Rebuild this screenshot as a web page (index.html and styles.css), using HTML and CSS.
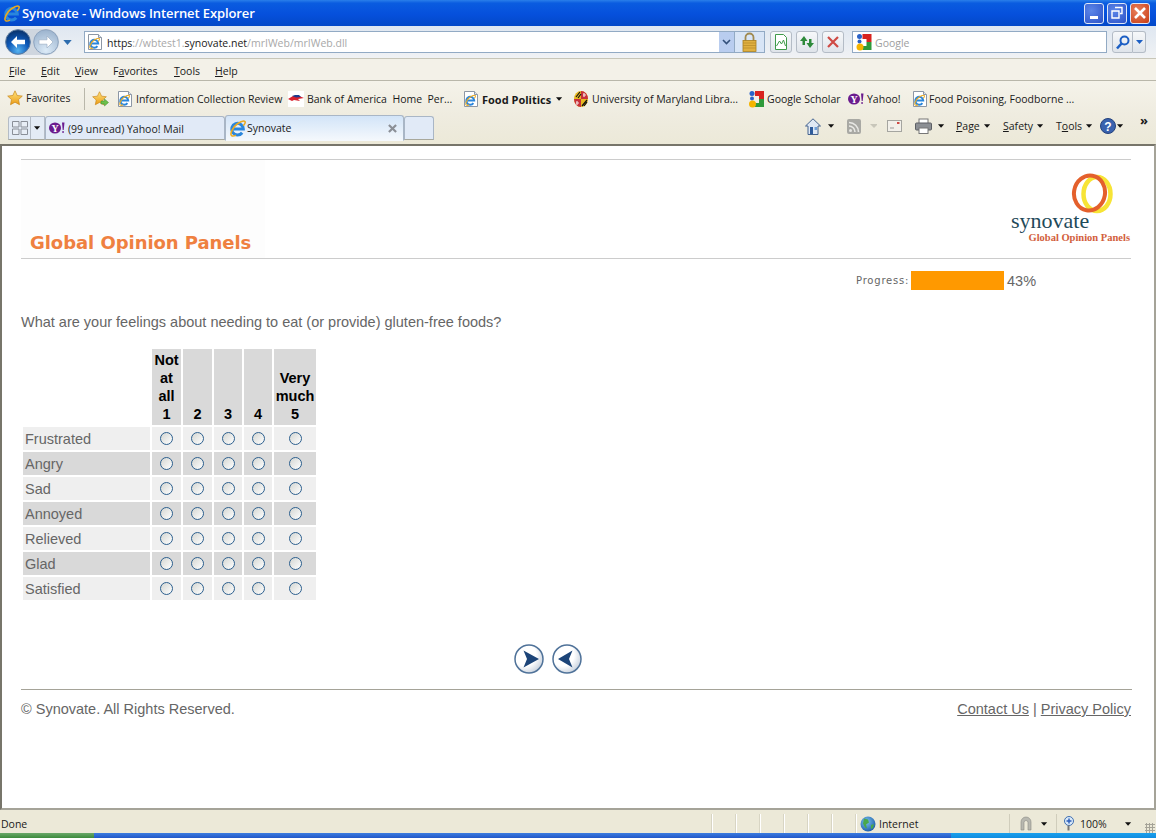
FILE: index.html
```html
<!DOCTYPE html>
<html lang="en">
<head>
  <meta charset="UTF-8">
  <title>Synovate - Windows Internet Explorer</title>
  <link rel="stylesheet" href="styles.css">
</head>
<body>
  <svg class="sprite" width="0" height="0">
    <defs>
      <linearGradient id="star-fill" x1="0" y1="0" x2="0" y2="1">
        <stop offset="0" stop-color="#ffe680"/>
        <stop offset="1" stop-color="#eb9a14"/>
      </linearGradient>
      <radialGradient id="orb-back" cx="0.5" cy="0.85" r="0.8">
        <stop offset="0" stop-color="#58b4f0"/>
        <stop offset="0.55" stop-color="#0d58b8"/>
        <stop offset="1" stop-color="#0a3570"/>
      </radialGradient>
      <radialGradient id="orb-fwd" cx="0.5" cy="0.85" r="0.8">
        <stop offset="0" stop-color="#dcebf8"/>
        <stop offset="1" stop-color="#9fb6d0"/>
      </radialGradient>
      <radialGradient id="orb-nav" cx="0.35" cy="0.35" r="0.8">
        <stop offset="0.5" stop-color="#ffffff"/>
        <stop offset="1" stop-color="#b8c4d4"/>
      </radialGradient>
      <radialGradient id="globe" cx="0.4" cy="0.35" r="0.7">
        <stop offset="0" stop-color="#7cc4f0"/>
        <stop offset="1" stop-color="#1c5aa8"/>
      </radialGradient>
      <symbol id="ie" viewBox="0 0 16 16">
        <path d="M4 8.500h9.500A5.500 5.500 0 1 0 12.400 12" fill="none" stroke="#2a86dc" stroke-width="2.800"/>
        <path d="M2.500 14.800C.5 13.300 3.500 6.500 8 3.500c3-2 6-3 7-2 .8.8-.3 2.500-1.500 4M2.500 14.800c1 .6 2.500.2 4-.6" fill="none" stroke="#eba91f" stroke-width="1.500"/>
      </symbol>
      <symbol id="page" viewBox="0 0 16 16">
        <path d="M1.500.5h10l3 3v12h-13z" fill="#fff" stroke="#8d97a5"/>
        <path d="M11.500.5v3h3" fill="#dfe6ee" stroke="#8d97a5"/>
        <use href="#ie" x="1.500" y="3.500" width="11.500" height="11.500"/>
      </symbol>
      <symbol id="star" viewBox="0 0 16 16">
        <path d="M8 .8l2.200 4.700 5.100.6-3.800 3.500 1 5.100L8 12.200l-4.500 2.500 1-5.100L.7 6.100l5.100-.6z" fill="url(#star-fill)" stroke="#c9871a" stroke-width=".7"/>
      </symbol>
      <symbol id="yahoo" viewBox="0 0 16 12">
        <ellipse cx="6" cy="6" rx="6" ry="5.500" fill="#6a1b8e"/>
        <text x="6" y="9.500" font-family="Liberation Serif, serif" font-weight="700" font-size="10" fill="#fff" text-anchor="middle">Y</text>
        <path d="M13 .5h2.500L14.700 8h-1zM13.400 9h1.300v2h-1.300z" fill="#6a1b8e"/>
      </symbol>
      <symbol id="google" viewBox="0 0 16 18">
        <path d="M7 1h9v8H11V6H7z" fill="#d8231f"/>
        <path d="M11 9h5v8H7v-4h4z" fill="#2f9a3a"/>
        <circle cx="4" cy="3.500" r="2.500" fill="#2a63c8"/>
        <circle cx="4" cy="8.500" r="2" fill="#2a63c8"/>
        <circle cx="4.500" cy="14" r="3.500" fill="#f5b400"/>
      </symbol>
      <symbol id="down" viewBox="0 0 8 4"><path d="M0 0h7L3.500 4z" fill="#111"/></symbol>
    </defs>
  </svg>

  <div class="window">
    <div class="titlebar">
      <svg class="title-icon"><use href="#ie"/></svg>
      <span class="title-text">Synovate - Windows Internet Explorer</span>
      <div class="win-buttons">
        <button class="win-btn"><span class="glyph-min"></span></button>
        <button class="win-btn">
          <svg width="14" height="14" viewBox="0 0 14 14"><path d="M5 1.500h7v6h-2M2 5h7v7H2z" fill="none" stroke="#fff" stroke-width="1.400"/></svg>
        </button>
        <button class="win-btn win-close">
          <svg width="14" height="14" viewBox="0 0 14 14"><path d="M2 2l10 10M12 2L2 12" stroke="#fff" stroke-width="2.600"/></svg>
        </button>
      </div>
    </div>

    <div class="addressbar">
      <div class="nav-orbs">
        <svg width="26" height="26" viewBox="0 0 26 26"><circle cx="13" cy="13" r="12.300" fill="url(#orb-back)" stroke="#5a7aa0"/><path d="M6 13l6-6v3.800h8v4.400h-8V19z" fill="#fff"/></svg>
        <svg width="26" height="26" viewBox="0 0 26 26"><circle cx="13" cy="13" r="12.300" fill="url(#orb-fwd)" stroke="#8ea4bf"/><path d="M20 13l-6-6v3.800H6v4.400h8V19z" fill="#fff" stroke="#9db0c6" stroke-width=".7"/></svg>
      </div>
      <svg class="nav-drop" viewBox="0 0 10 6"><path d="M0 0h10L5 6z" fill="#2d6cae"/></svg>
      <div class="urlbox">
        <svg class="url-icon"><use href="#page"/></svg>
        <span class="url"><b>https</b>://wbtest1.<b>synovate.net</b>/mrIWeb/mrIWeb.dll</span>
        <span class="url-drop">
          <svg width="9" height="6" viewBox="0 0 9 6"><path d="M1 1l3.500 3.500L8 1" fill="none" stroke="#33507a" stroke-width="1.600"/></svg>
        </span>
        <span class="url-lock">
          <svg width="15" height="20" viewBox="0 0 15 20"><path d="M3.500 9V5.500a4 4 0 0 1 8 0V9" fill="none" stroke="#a08a50" stroke-width="1.800"/><rect x="1" y="8.500" width="13" height="11" fill="#e0b040" stroke="#a97f20" stroke-width=".8"/><path d="M1 11h13M1 13.500h13M1 16h13" stroke="#b48a28" stroke-width=".7"/></svg>
        </span>
      </div>
      <div class="action-btns">
        <button class="action-btn">
          <svg width="14" height="16" viewBox="0 0 14 16"><path d="M1.500.5h8l3 3v12h-11z" fill="#fff" stroke="#3f9a4a"/><path d="M2.500 12l3-5 2 3 2-4 2 6" fill="none" stroke="#3f9a4a"/></svg>
        </button>
        <button class="action-btn">
          <svg width="16" height="16" viewBox="0 0 16 16"><path d="M5 2L1 7h2.500v4H6V7h2.500z" fill="#2d8a3a"/><path d="M11 14l4-5h-2.500V5H10v4H7.500z" fill="#2d8a3a"/></svg>
        </button>
        <button class="action-btn">
          <svg width="12" height="12" viewBox="0 0 12 12"><path d="M1 1l10 10M11 1L1 11" stroke="#cf4a44" stroke-width="2.200"/></svg>
        </button>
      </div>
      <div class="searchbox">
        <svg class="search-icon"><use href="#google"/></svg>
        <span class="search-hint">Google</span>
      </div>
      <div class="search-btns">
        <button class="search-go">
          <svg width="14" height="15" viewBox="0 0 14 15"><circle cx="8.500" cy="5.500" r="4" fill="none" stroke="#1c5fc4" stroke-width="2"/><path d="M5.500 8.500L1 13.500" stroke="#1c5fc4" stroke-width="2.600"/></svg>
        </button>
        <button class="search-drop">
          <svg width="7" height="4" viewBox="0 0 7 4"><path d="M0 0h7L3.500 4z" fill="#1c5fc4"/></svg>
        </button>
      </div>
    </div>

    <div class="menubar">
      <span class="m-file"><u>F</u>ile</span>
      <span class="m-edit"><u>E</u>dit</span>
      <span class="m-view"><u>V</u>iew</span>
      <span class="m-fav">F<u>a</u>vorites</span>
      <span class="m-tools"><u>T</u>ools</span>
      <span class="m-help"><u>H</u>elp</span>
    </div>

    <div class="favbar">
      <span class="fav fav-main"><svg class="fav-star"><use href="#star"/></svg>Favorites</span>
      <span class="fav-sep"></span>
      <svg class="fav-add" viewBox="0 0 17 16"><use href="#star" width="15" height="15"/><path d="M9 10h3.500V8l4 3.500-4 3.500v-2H9z" fill="#6cc04a" stroke="#3f8a2c" stroke-width=".5"/></svg>
      <span class="fav f-info"><svg class="fav-icon"><use href="#page"/></svg>Information Collection Review</span>
      <span class="fav f-boa">
        <svg class="fav-icon" viewBox="0 0 16 16"><rect width="16" height="16" fill="#fff"/><path d="M0 8l5-3h6l5 2-6 1 2 2-6-1-2 1z" fill="#d8202c"/><path d="M4 5l3-1h4l2 2-5 .5z" fill="#1a3a8c"/></svg>
        Bank of America&nbsp; Home&nbsp; Per...
      </span>
      <span class="fav f-food"><svg class="fav-icon"><use href="#page"/></svg><b>Food Politics</b><svg class="caret"><use href="#down"/></svg></span>
      <span class="fav f-umd">
        <svg class="fav-icon" viewBox="0 0 16 16"><ellipse cx="8" cy="8" rx="7" ry="8" fill="#e8b820"/><path d="M8 0a7 8 0 0 1 7 8H8zM8 8v8a7 8 0 0 1-7-8z" fill="#c8303a"/><path d="M11 2v4M10 4h3M4 10v4M3 12h3" stroke="#f4e0e0" stroke-width="1.200"/><path d="M3 6l4-5M5 7l3-4M9 15l5-6M11 15l3-4" stroke="#111" stroke-width="1.200"/></svg>
        University of Maryland Libra...
      </span>
      <span class="fav f-scholar"><svg class="fav-icon google-tall"><use href="#google"/></svg>Google Scholar</span>
      <span class="fav f-yahoo"><svg class="fav-icon yahoo-small"><use href="#yahoo"/></svg>Yahoo!</span>
      <span class="fav f-poison"><svg class="fav-icon"><use href="#page"/></svg>Food Poisoning, Foodborne ...</span>
    </div>

    <div class="tabbar">
      <div class="quicktabs">
        <span class="qt-grid">
          <svg width="16" height="14" viewBox="0 0 16 14"><path d="M.5.500h6.500v5.500H.5zM9 .500h6.500v5.500H9zM.5 8h6.500v5.500H.5zM9 8h6.500v5.500H9z" fill="#e8eef6" stroke="#8a8f98"/></svg>
        </span>
        <span class="qt-drop"><svg class="caret"><use href="#down"/></svg></span>
      </div>
      <div class="tab">
        <svg class="tab-yahoo"><use href="#yahoo"/></svg>
        <span class="tab-text">(99 unread) Yahoo! Mail</span>
      </div>
      <div class="tab tab-active">
        <svg class="tab-ie"><use href="#ie"/></svg>
        <span class="tab-label">Synovate</span>
        <svg class="tab-close" viewBox="0 0 10 10"><path d="M1 1l8 8M9 1L1 9" stroke="#8b8f96" stroke-width="2.400"/></svg>
      </div>
      <div class="tab tab-new"></div>

      <div class="commands">
        <svg class="cmd-home" viewBox="0 0 16 17"><path d="M8 .8L.5 8h2.500v8.500h10V8h2.500z" fill="#dfe8f4" stroke="#44638e"/><rect x="5" y="9" width="3" height="7" fill="#2f5c9c"/><rect x="9.500" y="9" width="2.500" height="3" fill="#6fa0d8"/></svg>
        <svg class="caret c-home"><use href="#down"/></svg>
        <svg class="cmd-rss" viewBox="0 0 14 15"><rect width="14" height="15" rx="2" fill="#a9a9a4"/><circle cx="3.500" cy="11.500" r="1.500" fill="#e8e8e4"/><path d="M2 7a6 6 0 0 1 6 6M2 3.500A9.500 9.500 0 0 1 11.500 13" fill="none" stroke="#e8e8e4" stroke-width="1.600"/></svg>
        <svg class="caret c-rss"><path d="M0 0h8L4 4z" fill="#c8c6ba"/></svg>
        <svg class="cmd-mail" viewBox="0 0 15 12"><rect x=".5" y=".5" width="14" height="11" fill="#f2f0ea" stroke="#a5a5a0"/><rect x="10" y="2" width="2.500" height="2" fill="#cf4a44"/><path d="M3 8h4" stroke="#999"/></svg>
        <svg class="cmd-print" viewBox="0 0 17 16"><rect x="4" y="1" width="9" height="5" fill="#fff" stroke="#777"/><rect x=".5" y="5" width="16" height="7" rx="1" fill="#8c8f94" stroke="#5c5f64"/><rect x="4" y="10" width="9" height="5.500" fill="#fff" stroke="#777"/></svg>
        <svg class="caret c-print"><use href="#down"/></svg>
        <span class="cmd c-page"><u>P</u>age<svg class="caret"><use href="#down"/></svg></span>
        <span class="cmd c-safety"><u>S</u>afety<svg class="caret"><use href="#down"/></svg></span>
        <span class="cmd c-tools">T<u>o</u>ols<svg class="caret"><use href="#down"/></svg></span>
        <svg class="cmd-help" viewBox="0 0 16 16"><circle cx="8" cy="8" r="7.500" fill="#3a62ae" stroke="#24427c"/><text x="8" y="12.500" font-family="Liberation Sans, sans-serif" font-weight="700" font-size="12" fill="#fff" text-anchor="middle">?</text></svg>
        <svg class="caret c-help"><use href="#down"/></svg>
        <span class="chevrons">»</span>
      </div>
    </div>

    <main class="content">
      <header class="banner">
        <div class="banner-title"><h1>Global Opinion Panels</h1></div>
        <div class="logo">
          <svg class="logo-ring" viewBox="0 0 42 42">
            <ellipse cx="26" cy="21" rx="13.500" ry="17" fill="none" stroke="#f7e436" stroke-width="4.500"/>
            <ellipse cx="18.500" cy="20" rx="15.500" ry="17.500" fill="none" stroke="#e4602c" stroke-width="4" transform="rotate(10 18.500 20)"/>
          </svg>
          <span class="logo-name">synovate</span>
          <span class="logo-sub">Global Opinion Panels</span>
        </div>
      </header>

      <div class="progress">
        <span class="progress-label">Progress:</span>
        <span class="progress-bar"></span>
        <span class="progress-value">43%</span>
      </div>

      <p class="question">What are your feelings about needing to eat (or provide) gluten-free foods?</p>

      <table class="grid">
        <thead>
          <tr>
            <th class="blank"></th>
            <th class="c1">Not<br>at<br>all<br>1</th>
            <th class="c2">2</th>
            <th class="c3">3</th>
            <th class="c4">4</th>
            <th class="c5">Very<br>much<br>5</th>
          </tr>
        </thead>
        <tbody>
          <tr>
            <td class="row-label">Frustrated</td>
            <td><input class="radio" type="radio" name="q1"></td>
            <td><input class="radio" type="radio" name="q1"></td>
            <td><input class="radio" type="radio" name="q1"></td>
            <td><input class="radio" type="radio" name="q1"></td>
            <td><input class="radio" type="radio" name="q1"></td>
          </tr>
          <tr class="alt">
            <td class="row-label">Angry</td>
            <td><input class="radio" type="radio" name="q2"></td>
            <td><input class="radio" type="radio" name="q2"></td>
            <td><input class="radio" type="radio" name="q2"></td>
            <td><input class="radio" type="radio" name="q2"></td>
            <td><input class="radio" type="radio" name="q2"></td>
          </tr>
          <tr>
            <td class="row-label">Sad</td>
            <td><input class="radio" type="radio" name="q3"></td>
            <td><input class="radio" type="radio" name="q3"></td>
            <td><input class="radio" type="radio" name="q3"></td>
            <td><input class="radio" type="radio" name="q3"></td>
            <td><input class="radio" type="radio" name="q3"></td>
          </tr>
          <tr class="alt">
            <td class="row-label">Annoyed</td>
            <td><input class="radio" type="radio" name="q4"></td>
            <td><input class="radio" type="radio" name="q4"></td>
            <td><input class="radio" type="radio" name="q4"></td>
            <td><input class="radio" type="radio" name="q4"></td>
            <td><input class="radio" type="radio" name="q4"></td>
          </tr>
          <tr>
            <td class="row-label">Relieved</td>
            <td><input class="radio" type="radio" name="q5"></td>
            <td><input class="radio" type="radio" name="q5"></td>
            <td><input class="radio" type="radio" name="q5"></td>
            <td><input class="radio" type="radio" name="q5"></td>
            <td><input class="radio" type="radio" name="q5"></td>
          </tr>
          <tr class="alt">
            <td class="row-label">Glad</td>
            <td><input class="radio" type="radio" name="q6"></td>
            <td><input class="radio" type="radio" name="q6"></td>
            <td><input class="radio" type="radio" name="q6"></td>
            <td><input class="radio" type="radio" name="q6"></td>
            <td><input class="radio" type="radio" name="q6"></td>
          </tr>
          <tr>
            <td class="row-label">Satisfied</td>
            <td><input class="radio" type="radio" name="q7"></td>
            <td><input class="radio" type="radio" name="q7"></td>
            <td><input class="radio" type="radio" name="q7"></td>
            <td><input class="radio" type="radio" name="q7"></td>
            <td><input class="radio" type="radio" name="q7"></td>
          </tr>
        </tbody>
      </table>

      <div class="pager">
        <svg class="pager-btn" viewBox="0 0 30 30"><circle cx="15" cy="15" r="14" fill="url(#orb-nav)" stroke="#4f7299" stroke-width="1.500"/><path d="M9.500 6.500L25 15 9.500 23.500 13 15z" fill="#1c4478"/></svg>
        <svg class="pager-btn" viewBox="0 0 30 30"><circle cx="15" cy="15" r="14" fill="url(#orb-nav)" stroke="#4f7299" stroke-width="1.500"/><path d="M20.500 6.500L6 15l14.500 8.500L17 15z" fill="#1c4478"/></svg>
      </div>

      <footer class="footer">
        <span>© Synovate. All Rights Reserved.</span>
        <span><a href="#">Contact Us</a> | <a href="#">Privacy Policy</a></span>
      </footer>
    </main>

    <div class="statusbar">
      <span class="status-text">Done</span>
      <span class="zones"><i></i><i></i><i></i><i></i><i></i><i></i><i></i></span>
      <span class="zone-net">
        <svg class="globe" viewBox="0 0 16 16"><circle cx="8" cy="8" r="7.500" fill="url(#globe)"/><path d="M4 2.500l4 1 1 3-3 2 1 4-2-1-2-4zM11 9l3-1-1 4-2 1z" fill="#4aa84a"/></svg>
        Internet
      </span>
      <span class="status-sep sep-a"></span>
      <svg class="protect" viewBox="0 0 14 16"><path d="M7 1a5 5 0 0 0-5 5v8h3V6.500a2 2 0 0 1 4 0V14h3V6a5 5 0 0 0-5-5z" fill="#b8b8b0" stroke="#8a8a84" stroke-width=".6"/></svg>
      <svg class="caret c-protect"><use href="#down"/></svg>
      <span class="status-sep sep-b"></span>
      <svg class="magnifier" viewBox="0 0 12 15"><circle cx="6" cy="5" r="4.500" fill="#d8e8f8" stroke="#3f6fb0"/><path d="M6 2.500v5M3.500 5h5" stroke="#2a5cb8" stroke-width="1.400"/><path d="M5.500 9.500v5" stroke="#777" stroke-width="2"/></svg>
      <span class="zoom-value">100%</span>
      <svg class="caret c-zoom"><use href="#down"/></svg>
      <span class="grip"></span>
    </div>

    <div class="taskbar">
      <span class="start"></span>
      <span class="task-mid"></span>
      <span class="tray"></span>
    </div>
  </div>
</body>
</html>
```

FILE: styles.css
```css
* {
  box-sizing: border-box;
}

html, body {
  margin: 0;
  padding: 0;
}

body {
  font-family: "Open Sans", "Liberation Sans", sans-serif;
  font-size: 11px;
  color: #1a1a1a;
  background: #fff;
}

.sprite {
  display: block;
  height: 0;
  overflow: hidden;
}

.window {
  width: 1156px;
  height: 838px;
  display: flex;
  flex-direction: column;
  overflow: hidden;
}

button {
  padding: 0;
  margin: 0;
  cursor: default;
}

.caret {
  width: 7px;
  height: 4px;
  flex: none;
}

/* title bar */
.titlebar {
  height: 26px;
  display: flex;
  align-items: center;
  padding-left: 3px;
  background: linear-gradient(#2a7fea 0, #0a5ce0 12%, #0650dc 55%, #0348c8 100%);
}

.title-icon {
  width: 17px;
  height: 17px;
  flex: none;
}

.title-text {
  margin-left: 2px;
  font-size: 13px;
  font-weight: 600;
  letter-spacing: -0.1px;
  color: #fff;
}

.win-buttons {
  margin-left: auto;
  margin-right: 6px;
  display: flex;
  gap: 3px;
}

.win-btn {
  width: 20px;
  height: 21px;
  display: flex;
  align-items: center;
  justify-content: center;
  border: 1px solid #dfe8f8;
  border-radius: 3px;
  background: radial-gradient(circle at 35% 35%, #5c86e8, #2c52c8);
}

.win-close {
  background: radial-gradient(circle at 35% 35%, #e8805c, #c83c14);
}

.glyph-min {
  width: 8px;
  height: 3px;
  margin-top: 9px;
  background: #fff;
}

/* address row */
.addressbar {
  height: 33px;
  display: flex;
  align-items: center;
  padding-left: 5px;
  background: linear-gradient(#dfe7f1, #f0f2f4);
  border-bottom: 1px solid #c8c6b8;
}

.nav-orbs {
  display: flex;
  gap: 2px;
  width: 54px;
  border-radius: 13px;
  background: #cfd6df;
}

.nav-orbs svg {
  flex: none;
}

.nav-drop {
  width: 9px;
  height: 5px;
  margin-left: 4px;
}

.urlbox {
  width: 681px;
  height: 22px;
  margin-left: 12px;
  display: flex;
  align-items: center;
  background: #fff;
  border: 1px solid #92aac4;
  padding-left: 2px;
}

.url-icon {
  width: 16px;
  height: 16px;
  flex: none;
}

.url {
  margin: 2px 0 0 4px;
  font-size: 10.500px;
  color: #a8a8a8;
}

.url b {
  font-weight: 400;
  color: #1a1a1a;
}

.url-drop {
  margin-left: auto;
  width: 15px;
  height: 20px;
  display: flex;
  align-items: center;
  justify-content: center;
  background: #b9cdef;
}

.url-lock {
  width: 30px;
  height: 20px;
  display: flex;
  align-items: center;
  justify-content: center;
  background: #d8e5f6;
  border-left: 1px solid #92aac4;
}

.action-btns {
  margin-left: 5px;
  display: flex;
  gap: 4px;
}

.action-btn {
  width: 22px;
  height: 22px;
  display: flex;
  align-items: center;
  justify-content: center;
  background: linear-gradient(#f6f8fa, #dfe4ea);
  border: 1px solid #b4bcc6;
  border-radius: 3px;
}

.searchbox {
  width: 255px;
  height: 22px;
  margin-left: 8px;
  display: flex;
  align-items: center;
  gap: 3px;
  padding-left: 2px;
  background: #fff;
  border: 1px solid #92aac4;
}

.search-icon {
  width: 17px;
  height: 18px;
  flex: none;
}

.search-hint {
  margin-top: 2px;
  color: #a0a0a0;
  font-size: 10.500px;
}

.search-btns {
  margin-left: 5px;
  display: flex;
}

.search-go, .search-drop {
  height: 22px;
  display: flex;
  align-items: center;
  justify-content: center;
  background: linear-gradient(#f6f8fa, #dfe4ea);
  border: 1px solid #b4bcc6;
}

.search-go {
  width: 21px;
  border-radius: 3px 0 0 3px;
}

.search-drop {
  width: 13px;
  border-left: 0;
  border-radius: 0 3px 3px 0;
}

/* menu row */
.menubar {
  height: 22px;
  display: flex;
  align-items: center;
  padding: 3px 0 0 9px;
  background: #f3f1e8;
  border-bottom: 1px solid #b9b7aa;
  font-size: 10.500px;
}

.m-file { width: 32px; }
.m-edit { width: 34px; }
.m-view { width: 38px; }
.m-fav { width: 61px; }
.m-tools { width: 41px; }

/* favorites row */
.favbar {
  height: 34px;
  display: flex;
  align-items: center;
  padding: 2px 0 0 7px;
  background: linear-gradient(#f5f3ea, #efece0);
  white-space: nowrap;
  font-size: 10.500px;
}

.fav {
  display: flex;
  align-items: center;
  flex: none;
  overflow: hidden;
}

.fav-main { width: 70px; gap: 3px; margin-top: -3px; }
.fav-star { width: 16px; height: 16px; flex: none; }

.fav-sep {
  width: 1px;
  height: 22px;
  margin-left: 7px;
  background: #b9b7aa;
}

.fav-add {
  width: 17px;
  height: 16px;
  margin-left: 7px;
  flex: none;
}

.fav-icon {
  width: 16px;
  height: 16px;
  margin-right: 3px;
  flex: none;
}

.google-tall { height: 18px; }
.yahoo-small { height: 12px; }

.f-info { margin-left: 8px; width: 171px; }
.f-boa { width: 175px; }
.f-food { width: 110px; }
.f-food b { font-size: 11px; }
.f-food .caret { margin-left: 5px; }
.f-umd { width: 175px; }
.f-scholar { width: 100px; }
.f-yahoo { width: 64px; }
.f-poison { width: 170px; }
.f-poison .fav-icon { margin-right: 1px; }

/* tab row */
.tabbar {
  height: 29px;
  display: flex;
  align-items: flex-end;
  padding-left: 8px;
  padding-bottom: 4px;
  background: linear-gradient(#efece0, #ece9d8);
  font-size: 10.500px;
}

.quicktabs {
  width: 37px;
  height: 24px;
  display: flex;
  border: 1px solid #b4bcc6;
  border-bottom-color: #a8a89c;
  border-radius: 3px 0 0 0;
  background: #e3ebf5;
}

.qt-grid {
  width: 23px;
  display: flex;
  align-items: center;
  justify-content: center;
  border-right: 1px solid #b4bcc6;
}

.qt-drop {
  width: 13px;
  display: flex;
  align-items: center;
  justify-content: center;
}

.tab {
  width: 180px;
  height: 24px;
  display: flex;
  align-items: center;
  gap: 2px;
  padding-left: 3px;
  border: 1px solid #a9b6c6;
  border-bottom-color: #a8a89c;
  border-radius: 3px 3px 0 0;
  background: #e1eaf7;
}

.tab-yahoo {
  width: 16px;
  height: 12px;
  flex: none;
}

.tab-text {
  margin: 2px 0 0 1px;
}

.tab-active {
  width: 179px;
  height: 26px;
  margin-bottom: -1px;
  background: linear-gradient(#d2e4f8, #f4f8fc);
  border-bottom-color: #f4f8fc;
}

.tab-ie {
  width: 17px;
  height: 17px;
  flex: none;
}

.tab-label {
  margin-left: -1px;
}

.tab-close {
  width: 9px;
  height: 9px;
  margin-left: auto;
  margin-right: 6px;
}

.tab-new {
  width: 30px;
}

.commands {
  flex: 1;
  height: 24px;
  margin-bottom: 2px;
  display: flex;
  align-items: center;
  padding-left: 371px;
  white-space: nowrap;
}

.cmd-home { width: 16px; height: 17px; flex: none; }
.c-home { margin-left: 7px; }
.cmd-rss { width: 14px; height: 15px; margin-left: 12px; flex: none; }
.c-rss { margin-left: 9px; }
.cmd-mail { width: 15px; height: 12px; margin-left: 10px; flex: none; }
.cmd-print { width: 17px; height: 16px; margin-left: 13px; flex: none; }
.c-print { margin-left: 6px; }

.cmd {
  display: flex;
  align-items: center;
  flex: none;
}

.cmd .caret { margin-left: 4px; }
.c-page { margin-left: 11px; width: 47px; }
.c-safety { width: 53px; }
.c-tools { width: 44px; }
.cmd-help { width: 16px; height: 16px; flex: none; }
.c-help { margin-left: 1px; }

.chevrons {
  margin-left: 16px;
  margin-top: -12px;
  font-size: 13px;
  font-weight: 700;
}

/* page content */
.content {
  flex: 1;
  display: flex;
  flex-direction: column;
  padding: 13px 22px 0 19px;
  background: #fff;
  border-top: 2px solid #77756a;
  border-left: 2px solid #77756a;
  border-right: 2px solid #a5a398;
  border-bottom: 2px solid #a5a398;
  font-family: "Liberation Sans", Arial, sans-serif;
  font-size: 14.500px;
  color: #666;
}

.banner {
  height: 100px;
  margin-right: 1px;
  display: flex;
  justify-content: space-between;
  border-top: 1px solid #ccc;
  border-bottom: 1px solid #ccc;
}

.banner-title {
  width: 244px;
  display: flex;
  align-items: flex-end;
  padding: 0 0 5px 9px;
  background: #fdfdfd;
}

.banner-title h1 {
  margin: 0;
  font-family: "DejaVu Sans", Verdana, sans-serif;
  font-size: 18px;
  font-weight: 700;
  letter-spacing: -0.05px;
  color: #ef8040;
  white-space: nowrap;
}

.logo {
  width: 120px;
  display: flex;
  flex-direction: column;
  align-items: flex-end;
  padding-top: 13px;
  font-family: "Liberation Serif", serif;
}

.logo-ring {
  width: 42px;
  height: 42px;
  margin-right: 18px;
  flex: none;
}

.logo-name {
  align-self: flex-start;
  margin-top: -5px;
  font-size: 22px;
  line-height: 22px;
  color: #1f4a5a;
}

.logo-sub {
  margin-right: 1px;
  font-size: 10.500px;
  font-weight: 700;
  line-height: 11px;
  color: #d2603c;
  white-space: nowrap;
}

.progress {
  height: 19px;
  margin-top: 12px;
  display: flex;
  align-items: center;
  padding-left: 835px;
}

.progress-label {
  width: 55px;
  font-family: "DejaVu Sans", Verdana, sans-serif;
  font-size: 10px;
  letter-spacing: 0.08em;
  white-space: nowrap;
}

.progress-bar {
  width: 93px;
  height: 19px;
  background: #ff9900;
}

.progress-value {
  margin-left: 3px;
}

.question {
  margin: 23px 0 0;
  line-height: 18px;
}

.grid {
  margin: 16px 0 0 0;
  border-collapse: separate;
  border-spacing: 2px;
  table-layout: fixed;
  width: 297px;
}

.grid th {
  padding: 2px;
  height: 76px;
  vertical-align: bottom;
  text-align: center;
  background: #d9d9d9;
  color: #000;
  font-weight: 700;
  font-size: 14.500px;
  line-height: 18px;
}

.grid th.blank { width: 127px; background: none; }
.grid th.c1 { width: 29px; padding-left: 0; padding-right: 0; }
.grid th.c2 { width: 29px; }
.grid th.c3 { width: 28px; }
.grid th.c4 { width: 28px; }
.grid th.c5 { width: 42px; padding-left: 1px; padding-right: 1px; }

.grid td {
  height: 23px;
  padding: 0;
  text-align: center;
  background: #efefef;
}

.grid .alt td {
  background: #d9d9d9;
}

.grid td.row-label {
  text-align: left;
  padding-left: 2px;
}

.radio {
  appearance: none;
  display: block;
  width: 13px;
  height: 13px;
  margin: 0 auto;
  border: 1.500px solid #2c5f8e;
  border-radius: 50%;
  background: linear-gradient(135deg, #d4d6d2, #ffffff);
}

.pager {
  margin-top: 42px;
  display: flex;
  justify-content: center;
  gap: 8px;
  padding-right: 58px;
}

.pager-btn {
  width: 30px;
  height: 30px;
}

.footer {
  margin-top: 15px;
  padding: 10px 1px 0 0;
  display: flex;
  justify-content: space-between;
  border-top: 1px solid #a5a398;
  line-height: 18px;
}

.footer a {
  color: #666;
}

/* status bar */
.statusbar {
  height: 23px;
  display: flex;
  align-items: center;
  padding: 4px 0 0 1px;
  background: #ece9d8;
  font-size: 10.500px;
}

.status-text {
  width: 710px;
}

.zones {
  display: flex;
  flex: none;
  height: 19px;
}

.zones i {
  width: 24px;
  border-left: 1px solid #d8d5c4;
  box-shadow: inset 1px 0 0 #fff;
}

.zone-net {
  width: 154px;
  display: flex;
  align-items: center;
  gap: 3px;
  padding-left: 5px;
  margin-left: -24px;
}

.globe {
  width: 16px;
  height: 16px;
  flex: none;
}

.status-sep {
  width: 1px;
  height: 19px;
  background: #d0cdbc;
  flex: none;
}

.protect {
  width: 14px;
  height: 16px;
  margin-left: 9px;
  flex: none;
}

.c-protect { margin-left: 8px; }
.sep-b { margin-left: 8px; }

.magnifier {
  width: 12px;
  height: 15px;
  margin-left: 6px;
  flex: none;
}

.zoom-value {
  margin-left: 5px;
  width: 45px;
}

.grip {
  width: 10px;
  height: 10px;
  margin-left: 13px;
  align-self: flex-end;
  background: radial-gradient(circle, #a5a398 1px, transparent 1.200px) 0 0 / 3px 3px;
}

/* bit of the desktop taskbar below the window */
.taskbar {
  height: 5px;
  display: flex;
}

.start {
  width: 94px;
  background: linear-gradient(#6aa86a, #3c8a3c);
}

.task-mid {
  flex: 1;
  background: linear-gradient(#3c7ce0, #2258c8);
}

.tray {
  width: 205px;
  background: linear-gradient(#1aa0ec, #0f8ce0);
}
```
